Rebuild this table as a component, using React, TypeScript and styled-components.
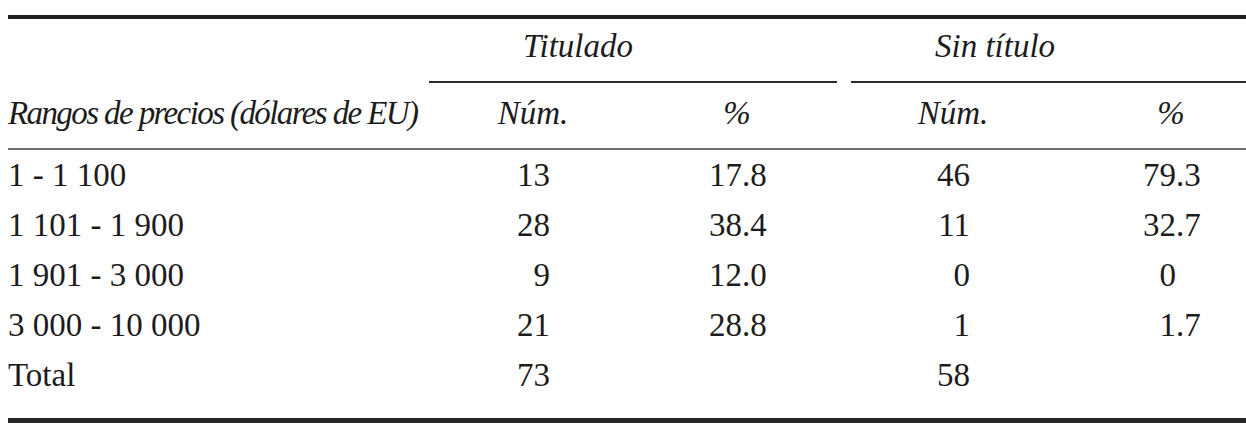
import { FC } from "react";
import styled, { createGlobalStyle } from "styled-components";

interface IPriceRow {
  range: string;
  titledNum: string;
  titledPct: string;
  untitledNum: string;
  untitledPct: string;
}

const rows: IPriceRow[] = [
  { range: "1 - 1 100", titledNum: "13", titledPct: "17.8", untitledNum: "46", untitledPct: "79.3" },
  { range: "1 101 - 1 900", titledNum: "28", titledPct: "38.4", untitledNum: "11", untitledPct: "32.7" },
  { range: "1 901 - 3 000", titledNum: "9", titledPct: "12.0", untitledNum: "0", untitledPct: "0" },
  { range: "3 000 - 10 000", titledNum: "21", titledPct: "28.8", untitledNum: "1", untitledPct: "1.7" },
  { range: "Total", titledNum: "73", titledPct: "", untitledNum: "58", untitledPct: "" },
];

// splits "17.8" into "17" and ".8" so the percentages line up on the point
const Pct: FC<{ value: string }> = ({ value }) => {
  const [int, frac] = value.split(".");
  return (
    <PctSlot>
      {int}
      <Frac>{frac ? `.${frac}` : ""}</Frac>
    </PctSlot>
  );
};

const App: FC = () => {
  return (
    <>
      <GlobalStyle />
      <Table>
        <TopRule />
        <Row>
          <span />
          <GroupCell>
            <GroupTitle $indent={92}>Titulado</GroupTitle>
            <GroupRule $left={-2} $right={2} />
          </GroupCell>
          <GroupCell>
            <GroupTitle $indent={96}>Sin título</GroupTitle>
            <GroupRule $left={12} $right={0} />
          </GroupCell>
        </Row>
        <SubHeader>
          <HeadLabel>Rangos de precios (dólares de EU)</HeadLabel>
          <HeadCell>Núm.</HeadCell>
          <HeadCell>%</HeadCell>
          <HeadCell>Núm.</HeadCell>
          <HeadCell $last>%</HeadCell>
        </SubHeader>
        {rows.map((row) => (
          <Row key={row.range}>
            <Label>{row.range}</Label>
            <Cell>
              <NumSlot>{row.titledNum}</NumSlot>
            </Cell>
            <Cell>{row.titledPct && <Pct value={row.titledPct} />}</Cell>
            <Cell>
              <NumSlot>{row.untitledNum}</NumSlot>
            </Cell>
            <Cell $last>{row.untitledPct && <Pct value={row.untitledPct} />}</Cell>
          </Row>
        ))}
        <BottomRule />
      </Table>
    </>
  );
};

export default App;

const GlobalStyle = createGlobalStyle`
  html, body {
    margin: 0;
    background: #ffffff;
    overflow: hidden;
  }
`;

const Table = styled.div`
  width: 1238px;
  padding: 15px 0 0 8px;
  font-family: "Liberation Serif", "Times New Roman", serif;
  font-size: 33px;
  color: #1c1c1c;
`;

const TopRule = styled.div`
  height: 4px;
  background: #1f1f1f;
`;

const BottomRule = styled.div`
  height: 5px;
  margin-top: 18px;
  background: #262626;
`;

const Row = styled.div`
  display: grid;
  grid-template-columns: 423px 204px 204px 228px 1fr;
  line-height: 50px;
`;

const GroupCell = styled.div`
  grid-column: span 2;
  padding-top: 9px;
`;

const GroupTitle = styled.div<{ $indent: number }>`
  padding-left: ${(props) => props.$indent}px;
  font-style: italic;
  line-height: 36px;
`;

const GroupRule = styled.div<{ $left: number; $right: number }>`
  height: 2px;
  margin: 17px ${(props) => props.$right}px 0 ${(props) => props.$left}px;
  background: #2e2e2e;
`;

const SubHeader = styled(Row)`
  padding: 12px 0 17px;
  line-height: 36px;
  font-style: italic;
  border-bottom: 2px solid #6e6e6e;
`;

const HeadLabel = styled.div`
  letter-spacing: -1.6px;
  white-space: nowrap;
`;

const HeadCell = styled.div<{ $last?: boolean }>`
  text-align: center;
  padding-left: ${(props) => (props.$last ? "29px" : "0")};
`;

const Label = styled.div`
  white-space: nowrap;
`;

const Cell = styled.div<{ $last?: boolean }>`
  text-align: center;
  padding-left: ${(props) => (props.$last ? "29px" : "0")};
`;

const NumSlot = styled.span`
  display: inline-block;
  width: 34px;
  text-align: right;
`;

const PctSlot = styled.span`
  display: inline-block;
  width: 60px;
  text-align: right;
`;

const Frac = styled.span`
  display: inline-block;
  min-width: 25px;
  text-align: left;
`;
